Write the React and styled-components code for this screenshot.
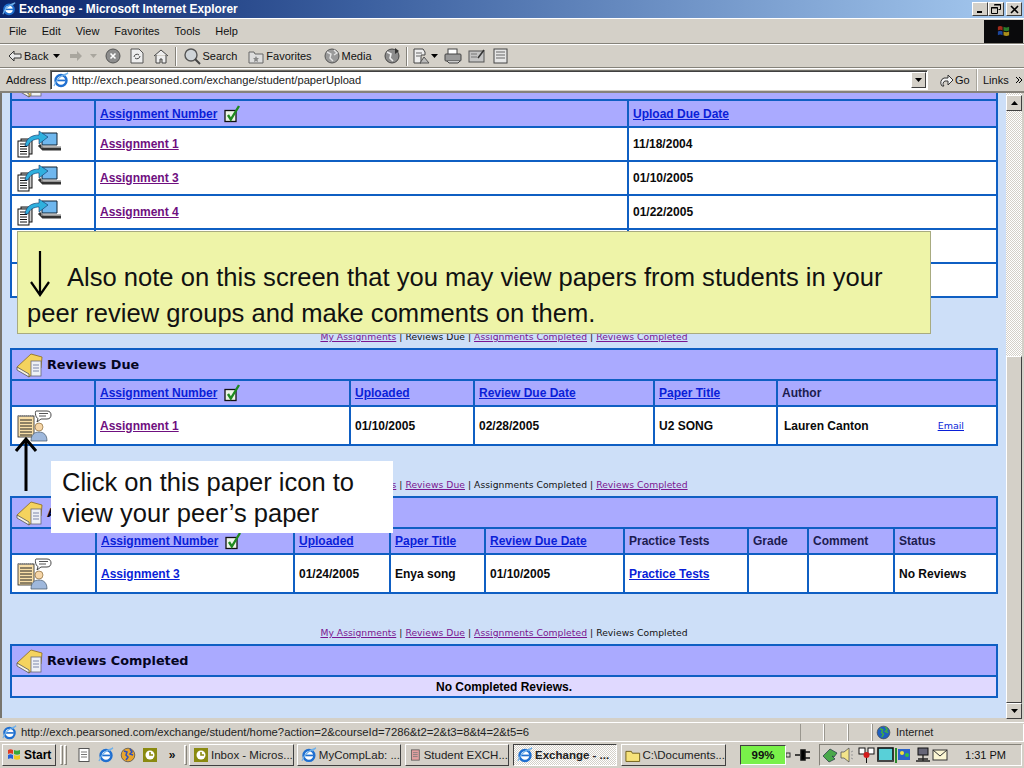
import React from "react"
import styled, { createGlobalStyle } from "styled-components"

const Global = createGlobalStyle`
  html, body { margin: 0; padding: 0; background: #d4d0c8; }
  * { box-sizing: border-box; }
`

const Window = styled.div`
  width: 1024px;
  height: 768px;
  display: flex;
  flex-direction: column;
  overflow: hidden;
  background: #d4d0c8;
  font-family: "Liberation Sans", Arial, sans-serif;
  font-size: 11px;
  color: #111;
`

const TitleBar = styled.div`
  height: 18px;
  flex: none;
  display: flex;
  align-items: center;
  padding: 0 2px;
  background: linear-gradient(90deg, #0a246a 0%, #3b5f9f 35%, #a6caf0 100%);
  color: #fff;
  font-weight: bold;
  font-size: 11.9px;
`

const TitleText = styled.span`
  flex: 1;
  margin-left: 3px;
`

const WinButton = styled.div`
  width: 16px;
  height: 14px;
  margin-left: ${p => (p.$gap ? 2 : 0)}px;
  background: #d4d0c8;
  border: 1px solid;
  border-color: #fff #404040 #404040 #fff;
  display: flex;
  align-items: center;
  justify-content: center;
  color: #000;
`

const Bar = styled.div`
  height: ${p => p.$h}px;
  flex: none;
  display: flex;
  align-items: center;
  border-bottom: 1px solid #85827a;
  border-top: 1px solid #fff;
`

const MenuBar = styled(Bar)`
  padding-left: 9px;
  gap: 15px;
`

const Throbber = styled.div`
  margin-left: auto;
  width: 39px;
  height: 23px;
  margin-right: 1px;
  background: #0a0a0c;
  display: flex;
  align-items: center;
  justify-content: center;
`

const ToolBar = styled(Bar)`
  padding-left: 8px;
`

const ToolLabel = styled.span`
  margin-left: ${p => p.$ml ?? 2}px;
  margin-right: ${p => p.$mr ?? 0}px;
`

const Spot = styled.div`
  width: ${p => p.$w ?? 18}px;
  height: 18px;
  margin-left: ${p => p.$ml ?? 0}px;
  flex: none;
  display: flex;
  align-items: center;
  justify-content: center;
`

const Divider = styled.div`
  width: 2px;
  height: 19px;
  flex: none;
  margin-left: ${p => p.$ml ?? 0}px;
  border-left: 1px solid #85827a;
  border-right: 1px solid #fff;
`

const AddressBar = styled(Bar)`
  padding-left: 6px;
  border-bottom: 2px solid #85827a;
`

const AddressLabel = styled.span`
  width: 44px;
  flex: none;
`

const AddressField = styled.div`
  width: 878px;
  height: 20px;
  flex: none;
  display: flex;
  align-items: center;
  background: #fff;
  border: 1px solid;
  border-color: #6b6a64 #fff #fff #6b6a64;
  box-shadow: inset 1px 1px 0 #404040;
  padding-left: 2px;
`

const Url = styled.span`
  margin-left: 3px;
  flex: 1;
  font-size: 11.15px;
  color: #222;
`

const Combo = styled.div`
  width: 15px;
  height: 16px;
  margin-right: 1px;
  background: #d4d0c8;
  border: 1px solid;
  border-color: #fff #404040 #404040 #fff;
  display: flex;
  align-items: center;
  justify-content: center;
`

const GoBox = styled.div`
  width: 38px;
  flex: none;
  display: flex;
  align-items: center;
  margin-left: 11px;
`

const LinksBox = styled.div`
  flex: 1;
  display: flex;
  align-items: center;
  gap: 6px;
  height: 22px;
  padding-left: 5px;
  border-left: 1px solid #fff;
  box-shadow: -1px 0 0 #a8a59c;
`

const Viewport = styled.div`
  flex: none;
  height: 625px;
  display: flex;
  border-left: 2px solid #77756e;
  border-right: 2px solid #d4d0c8;
`

const Page = styled.div`
  position: relative;
  flex: 1;
  overflow: hidden;
  background: #cddff8;
  padding: 0 8px;
  color: #000;
`

const Flow = styled.div`
  margin-top: -25px;
  display: flex;
  flex-direction: column;
`

const Panel = styled.div`
  border: 2px solid #0f5fc3;
  background: #fff;
`

const PanelTitle = styled.div`
  height: 31px;
  display: flex;
  align-items: center;
  padding-left: 4px;
  gap: 3px;
  background: #aaaaff;
  border-bottom: 2px solid #0f5fc3;
  font-family: "DejaVu Sans", Verdana, sans-serif;
  font-weight: bold;
  font-size: 12.8px;
  color: #05051e;
`

const Row = styled.div`
  display: grid;
  grid-template-columns: ${p => p.$cols};
  height: ${p => p.$h}px;
  background: ${p => (p.$head ? "#aaaaff" : "#fff")};
  border-bottom: ${p => (p.$last ? "none" : "2px solid #0f5fc3")};
`

const Cell = styled.div`
  display: flex;
  align-items: center;
  gap: 7px;
  padding-left: ${p => p.$pl ?? 4}px;
  border-left: ${p => (p.$first ? "none" : "2px solid #0f5fc3")};
  font-weight: bold;
  font-size: 12px;
  white-space: nowrap;
  position: relative;
`

const Plain = styled.span`
  color: ${p => (p.$head ? "#1c1c50" : "#0a0a0a")};
  margin-left: ${p => p.$ml ?? 0}px;
`

const Link = styled.a`
  color: ${p => (p.$visited ? "#6f0f7f" : "#0a1fd8")};
  text-decoration: underline;
  font-weight: bold;
  font-size: 12px;
`

const MailLink = styled.a`
  position: absolute;
  right: 32px;
  font-family: "DejaVu Sans", Verdana, sans-serif;
  font-weight: normal;
  font-size: 9.5px;
  color: #0a1fd8;
  text-decoration: underline;
`

const NavLine = styled.div`
  height: 50px;
  padding-bottom: 6px;
  display: flex;
  align-items: flex-end;
  justify-content: center;
  font-family: "DejaVu Sans", Verdana, sans-serif;
  font-size: 9.2px;
  letter-spacing: 0.05px;
  color: #111;
  white-space: pre;
`

const NavLink = styled.a`
  color: #7a1690;
  text-decoration: underline;
`

const EmptyRow = styled.div`
  height: 19px;
  background: #e0d9ff;
  display: flex;
  align-items: center;
  justify-content: center;
  font-weight: bold;
  font-size: 12px;
`

const YellowNote = styled.div`
  position: absolute;
  left: 15px;
  top: 138px;
  width: 914px;
  height: 103px;
  background: #eef4a8;
  border: 1px solid #a8ab80;
  padding: 27px 0 0 9px;
  font-size: 25.57px;
  line-height: 36px;
  color: #111;
`

const NoteIndent = styled.span`
  display: inline-block;
  width: 40px;
`

const WhiteNote = styled.div`
  position: absolute;
  left: 49px;
  top: 368px;
  width: 342px;
  height: 72px;
  background: #fff;
  padding: 6px 0 0 11px;
  font-size: 25.5px;
  line-height: 31px;
  color: #111;
`

const ArrowDown = styled.svg`
  position: absolute;
  left: 25px;
  top: 157px;
`

const ArrowUp = styled.svg`
  position: absolute;
  left: 12px;
  top: 343px;
`

const Scrollbar = styled.div`
  width: 16px;
  flex: none;
  display: flex;
  flex-direction: column;
  padding-top: 2px;
  background: repeating-conic-gradient(#d4d0c8 0 25%, #fff 0 50%) 0 0 / 2px 2px;
`

const ScrollButton = styled.div`
  height: 16px;
  flex: none;
  margin-top: ${p => (p.$end ? "auto" : "0")};
  background: #d4d0c8;
  border: 1px solid;
  border-color: #fff #404040 #404040 #fff;
  display: flex;
  align-items: center;
  justify-content: center;
`

const Thumb = styled.div`
  height: 347px;
  margin-top: 245px;
  flex: none;
  background: #d4d0c8;
  border: 1px solid;
  border-color: #fff #404040 #404040 #fff;
`

const StatusBar = styled.div`
  height: 19px;
  flex: none;
  display: flex;
  align-items: center;
  padding-left: 2px;
  margin-top: 4px;
  border-top: 1px solid #fff;
  color: #222;
`

const StatusText = styled.span`
  width: 779px;
  flex: none;
  margin-left: 4px;
  font-size: 11.3px;
  white-space: nowrap;
`

const StatusSlot = styled.div`
  width: ${p => p.$w}px;
  flex: ${p => (p.$w ? "none" : 1)};
  height: 17px;
  display: flex;
  align-items: center;
  gap: 5px;
  padding-left: 3px;
  border-left: 1px solid #9a978f;
  border-right: 1px solid #fff;
`

const TaskBar = styled.div`
  flex: 1;
  display: flex;
  align-items: center;
  padding-left: 2px;
  border-top: 1px solid #fff;
  background: #d4d0c8;
`

const StartButton = styled.div`
  width: 54px;
  height: 22px;
  flex: none;
  display: flex;
  align-items: center;
  gap: 2px;
  padding-left: 3px;
  font-weight: bold;
  font-size: 12px;
  color: #000;
  border: 1px solid;
  border-color: #fff #404040 #404040 #fff;
`

const Grip = styled.div`
  width: 3px;
  height: 20px;
  flex: none;
  margin-left: ${p => p.$ml ?? 4}px;
  border: 1px solid;
  border-color: #fff #85827a #85827a #fff;
`

const Quick = styled.div`
  width: 20px;
  height: 18px;
  flex: none;
  margin-left: ${p => p.$ml ?? 3}px;
  display: flex;
  align-items: center;
  justify-content: center;
  font-size: 12px;
  font-weight: bold;
`

const TaskButton = styled.div`
  width: ${p => p.$w ?? 104}px;
  height: 22px;
  flex: none;
  margin-left: ${p => p.$ml ?? 4}px;
  display: flex;
  align-items: center;
  gap: 2px;
  padding-left: 3px;
  white-space: nowrap;
  overflow: hidden;
  font-size: 11.5px;
  font-weight: ${p => (p.$active ? "bold" : "normal")};
  color: #222;
  border: 1px solid;
  border-color: ${p => (p.$active ? "#404040 #fff #fff #404040" : "#fff #404040 #404040 #fff")};
  background: ${p => (p.$active ? "repeating-conic-gradient(#d4d0c8 0 25%, #fff 0 50%) 0 0 / 2px 2px" : "#d4d0c8")};
`

const Battery = styled.div`
  width: 46px;
  height: 20px;
  flex: none;
  margin-left: 14px;
  background: #79f04a;
  border: 1px solid;
  border-color: #404040 #fff #fff #404040;
  display: flex;
  align-items: center;
  justify-content: center;
  font-weight: bold;
  font-size: 11.5px;
`

const Tray = styled.div`
  flex: 1;
  height: 22px;
  margin: 0 2px 0 7px;
  display: flex;
  align-items: center;
  padding-left: 3px;
  border: 1px solid;
  border-color: #85827a #fff #fff #85827a;
`

const Clock = styled.span`
  margin-left: auto;
  margin-right: 15px;
`

const IeIcon = ({ size = 16 }) => (
  <svg width={size} height={size} viewBox="0 0 16 16">
    <circle cx="8" cy="8.5" r="5.5" fill="#fff" stroke="#1f6fd0" strokeWidth="2.4" />
    <rect x="4" y="7.6" width="8.5" height="1.7" fill="#1f6fd0" />
    <path d="M1 14c2-6 7-11 14-13-2 1.500-3 2-4 3" fill="none" stroke="#6fb0ea" strokeWidth="1.200" />
  </svg>
)

const CheckIcon = () => (
  <svg width="18" height="20" viewBox="0 0 18 20">
    <rect x="1" y="6.500" width="11" height="11" fill="#eef5e8" stroke="#111" strokeWidth="1.300" />
    <path d="M4 11l2.800 4.500L15 2" fill="none" stroke="#1f8a1f" strokeWidth="2.400" />
  </svg>
)

const BookIcon = () => (
  <svg width="28" height="28" viewBox="0 0 28 28">
    <path d="M1 16L15 3l11 3-1 11-12 9z" fill="#f4d35e" stroke="#8a6a1a" strokeWidth=".8" />
    <path d="M1 16v3l12 7v-3z" fill="#f7f3e0" stroke="#555" strokeWidth=".8" />
    <rect x="15" y="10" width="10" height="15" fill="#eef1f6" stroke="#667" strokeWidth=".8" />
    <path d="M17 14h6M17 17h6M17 20h6" stroke="#7c88aa" strokeWidth="1.200" />
  </svg>
)

const UploadIcon = () => (
  <svg width="46" height="28" viewBox="0 0 46 28">
    <path d="M25 3h15v12H25z" fill="#6fb7ee" stroke="#123" strokeWidth="1" />
    <path d="M22 15l4 4h18" fill="none" stroke="#333" strokeWidth="3" />
    <path d="M24 17h20" stroke="#999" strokeWidth="1.400" />
    <rect x="4" y="9" width="11" height="15" fill="#ccc" stroke="#111" />
    <rect x="1" y="11" width="11" height="16" fill="#fff" stroke="#111" />
    <path d="M3 14h7M3 16.500h7M3 19h7M3 21.500h7M3 24h7" stroke="#111" />
    <path d="M8 16C9 8 15 5 22 5V1l9 6-9 7V9c-5 0-9 2-11 7z" fill="#2fb0de" stroke="#136" strokeWidth=".6" />
  </svg>
)

const ReviewIcon = () => (
  <svg width="36" height="32" viewBox="0 0 36 32">
    <rect x="2" y="6" width="16" height="21" fill="#f9dfa8" stroke="#222" strokeWidth=".8" />
    <path d="M2 6h16" stroke="#888" strokeWidth="2" strokeDasharray="1 1" />
    <path d="M4 10h12M4 13h12M4 16h12M4 19h12M4 22h12M4 25h12" stroke="#222" />
    <circle cx="23" cy="17" r="4" fill="#f6d6a8" stroke="#8a6a3a" strokeWidth=".7" />
    <path d="M15 31c0-6 3-9 8-9s8 3 8 9z" fill="#9fb8dc" stroke="#456" strokeWidth=".7" />
    <path d="M20 1h11c3 0 4 2 4 4s-1 4-4 4h-6l-4 3 1-3.500c-3-1-3-7.500-2-7.500z" fill="#fff" stroke="#333" strokeWidth=".9" />
    <path d="M23 3.500h9M23 6h7" stroke="#555" />
  </svg>
)

const TinyPage = ({ fill = "#eee" }) => (
  <svg width="16" height="16" viewBox="0 0 16 16">
    <rect x="3" y="1.500" width="10" height="13" fill={fill} stroke="#555" />
    <path d="M5 5h6M5 7.500h6M5 10h6" stroke="#777" />
  </svg>
)

const Globe = ({ size = 16, fill = "#8a8a8a", mark = "#ddd" }) => (
  <svg width={size} height={size} viewBox="0 0 16 16">
    <circle cx="8" cy="8" r="6.800" fill={fill} stroke="#444" strokeWidth=".7" />
    <path d="M4 4l3 1-1 3 2 2-2 3M10 2l2 3-2 2 3 1" fill="none" stroke={mark} strokeWidth="1.500" />
  </svg>
)

const OutlookIcon = () => (
  <svg width="16" height="16" viewBox="0 0 16 16">
    <rect x="1" y="1" width="14" height="14" fill="#8a8a10" />
    <circle cx="8" cy="8" r="4.500" fill="#fff" />
    <path d="M8 5v3h3" fill="none" stroke="#8a8a10" strokeWidth="1.600" />
  </svg>
)

const FolderIcon = () => (
  <svg width="17" height="15" viewBox="0 0 17 15">
    <path d="M1 3h6l1 2h8v9H1z" fill="#f6e27a" stroke="#6b5a14" />
  </svg>
)

const WinFlag = ({ size = 16, dim }) => (
  <svg width={size} height={size} viewBox="0 0 16 16" opacity={dim ? 0.7 : 1}>
    <path d="M2 3c2-1 3-1 5 0v4C5 6 4 6 2 7z" fill="#e03a22" />
    <path d="M8 3c2 1 4 1 6 0v4c-2 1-4 1-6 0z" fill="#38a838" />
    <path d="M2 8c2-1 3-1 5 0v4c-2-1-3-1-5 0z" fill="#2460d8" />
    <path d="M8 8c2 1 4 1 6 0v4c-2 1-4 1-6 0z" fill="#f0c820" />
  </svg>
)

const TrayIcons = () => (
  <svg width="126" height="18" viewBox="0 0 126 18">
    <path d="M0 10l7-7 7 4-3 4-2-1 3 3-6 3z" fill="#4aa84a" stroke="#234" strokeWidth=".7" />
    <path d="M18 6h3l5-4v14l-5-4h-3z" fill="#f3e48a" stroke="#555" strokeWidth=".8" />
    <path d="M28 6l2-1M28 9h2M28 12l2 1" stroke="#999" />
    <rect x="36" y="2" width="6" height="6" fill="#fff" stroke="#111" />
    <rect x="45" y="2" width="6" height="6" fill="#fff" stroke="#111" />
    <path d="M43.500 8v9" stroke="#111" />
    <circle cx="43.500" cy="9" r="3" fill="#d21c1c" />
    <rect x="55" y="2" width="15" height="13" fill="#58d0d8" stroke="#111" strokeWidth="1.600" />
    <rect x="55" y="14" width="15" height="2" fill="#444" />
    <rect x="75" y="3" width="12" height="11" fill="#2a62c8" />
    <path d="M73 2v15" stroke="#2a8a2a" strokeWidth="2" />
    <circle cx="79" cy="7" r="2" fill="#f0e040" />
    <circle cx="84" cy="9" r="2" fill="#30c040" />
    <rect x="95" y="2" width="10" height="7" fill="#667" stroke="#111" />
    <path d="M93 15h14M100 9v6M95 13h10" stroke="#222" strokeWidth="1.300" />
    <rect x="110" y="4" width="14" height="10" fill="#fbf6d2" stroke="#333" />
    <path d="M110 4l7 6 7-6" fill="none" stroke="#333" />
  </svg>
)

const Triangle = ({ up, color = "#000", w = 7 }) => (
  <svg width={w} height="4" viewBox="0 0 7 4">
    <path d={up ? "M3.500 0L7 4H0z" : "M0 0h7L3.500 4z"} fill={color} />
  </svg>
)

const FIRST = "82px 533px 1fr"
const DUE = "82px 255px 124px 180px 123px 1fr"
const DONE = "83px 198px 96px 95px 139px 124px 60px 86px 1fr"

const Nav = ({ current }) => {
  const names = ["My Assignments", "Reviews Due", "Assignments Completed", "Reviews Completed"]
  return (
    <NavLine>
      {names.map((n, i) => (
        <React.Fragment key={n}>
          {i > 0 && " | "}
          {n === current ? n : <NavLink>{n}</NavLink>}
        </React.Fragment>
      ))}
    </NavLine>
  )
}

const App = () => (
  <Window>
    <Global />
    <TitleBar>
      <IeIcon size={14} />
      <TitleText>Exchange - Microsoft Internet Explorer</TitleText>
      <WinButton>
        <svg width="8" height="8"><path d="M1 7h5" stroke="#000" strokeWidth="2" /></svg>
      </WinButton>
      <WinButton>
        <svg width="10" height="10"><path d="M3.500 .5h6v5h-2M.5 3.500h6v6h-6z" fill="none" stroke="#000" /><path d="M3 1h7M0 4h7" stroke="#000" /></svg>
      </WinButton>
      <WinButton $gap>
        <svg width="9" height="9"><path d="M1 1l7 7M8 1L1 8" stroke="#000" strokeWidth="1.600" /></svg>
      </WinButton>
    </TitleBar>
    <MenuBar $h={26}>
      <span>File</span>
      <span>Edit</span>
      <span>View</span>
      <span>Favorites</span>
      <span>Tools</span>
      <span>Help</span>
      <Throbber><WinFlag size={15} dim /></Throbber>
    </MenuBar>
    <ToolBar $h={24}>
      <Spot $w={14}>
        <svg width="14" height="12"><path d="M1 6l5-5v3h7v4H6v3z" fill="#e8e8e8" stroke="#333" /></svg>
      </Spot>
      <ToolLabel>Back</ToolLabel>
      <Spot $w={7} $ml={5}><Triangle /></Spot>
      <Spot $w={14} $ml={9}>
        <svg width="14" height="12"><path d="M13 6L8 1v3H1v4h7v3z" fill="#a9a69e" /></svg>
      </Spot>
      <Spot $w={7} $ml={7}><Triangle color="#a9a69e" /></Spot>
      <Spot $ml={7}>
        <svg width="16" height="16"><circle cx="8" cy="8" r="7" fill="#8c8c8c" stroke="#555" /><path d="M5.500 5.500l5 5M10.500 5.500l-5 5" stroke="#fff" strokeWidth="1.600" /></svg>
      </Spot>
      <Spot $ml={6}>
        <svg width="14" height="16"><path d="M1 1h8l4 4v10H1z" fill="#eee" stroke="#555" /><path d="M4 9a3 3 0 0 1 5-2M10 8a3 3 0 0 1-5 2" fill="none" stroke="#444" /></svg>
      </Spot>
      <Spot $ml={6}>
        <svg width="16" height="16"><path d="M1 8l7-6 7 6M3 7v8h4v-4h2v4h4V7" fill="#eee" stroke="#444" /></svg>
      </Spot>
      <Divider $ml={5} />
      <Spot $ml={6}>
        <svg width="18" height="18"><circle cx="8" cy="8" r="6" fill="#cfd4d8" stroke="#555" strokeWidth="1.400" /><path d="M12 12l5 5" stroke="#444" strokeWidth="2" /></svg>
      </Spot>
      <ToolLabel $ml={1} $mr={11}>Search</ToolLabel>
      <Spot $w={16}>
        <svg width="16" height="15"><path d="M1 3h5l1 2h8v9H1z" fill="#ddd" stroke="#666" /><path d="M8 7l1 2h2l-1.500 1.500L10 13l-2-1-2 1 .5-2.500L5 9h2z" fill="#888" /></svg>
      </Spot>
      <ToolLabel $mr={11}>Favorites</ToolLabel>
      <Spot>
        <svg width="18" height="18"><circle cx="9" cy="9" r="7" fill="#9a9a9a" stroke="#555" /><path d="M4 5l4 2-1 4 3 3M11 3l3 3-3 2" fill="none" stroke="#e4e4e4" strokeWidth="1.400" /></svg>
      </Spot>
      <ToolLabel $ml={1} $mr={11}>Media</ToolLabel>
      <Spot>
        <svg width="18" height="18"><circle cx="9" cy="9" r="7" fill="#8c8c8c" stroke="#444" /><path d="M4 5l4 2-1 4 3 3" fill="none" stroke="#eee" strokeWidth="1.600" /><path d="M12 1l4 3-4 3z" fill="#333" /></svg>
      </Spot>
      <Divider $ml={5} />
      <Spot $ml={5}>
        <svg width="18" height="16"><path d="M1 1h9l2 3v3H8v8H1z" fill="#eee" stroke="#444" /><path d="M3 5h6M3 8h4" stroke="#666" /><path d="M7 15l4-6 5 6z" fill="#bbb" stroke="#555" /></svg>
      </Spot>
      <Spot $w={7}><Triangle /></Spot>
      <Spot $ml={6}>
        <svg width="18" height="16"><rect x="4" y="1" width="9" height="6" fill="#fff" stroke="#444" /><rect x="1" y="6" width="16" height="7" rx="1" fill="#999" stroke="#444" /><path d="M3 13l2 2h9l2-2" fill="#ccc" stroke="#444" /></svg>
      </Spot>
      <Spot $ml={6}>
        <svg width="18" height="16"><rect x="1" y="3" width="15" height="11" fill="#c4c4c4" stroke="#555" /><path d="M3 6h6M3 9h6" stroke="#777" /><path d="M10 10l6-8" stroke="#333" strokeWidth="1.600" /></svg>
      </Spot>
      <Spot $ml={6}>
        <svg width="15" height="16"><rect x="1" y="1" width="13" height="14" fill="#e6e6e6" stroke="#444" /><path d="M3 4h9M3 7h9M3 10h9" stroke="#666" /></svg>
      </Spot>
    </ToolBar>
    <AddressBar $h={25}>
      <AddressLabel>Address</AddressLabel>
      <AddressField>
        <IeIcon />
        <Url>http://exch.pearsoned.com/exchange/student/paperUpload</Url>
        <Combo><Triangle /></Combo>
      </AddressField>
      <GoBox>
        <svg width="16" height="16"><path d="M3 14a5 5 0 0 1 2-8h4V3l5 5-5 5V9H6a3 3 0 0 0-1 5z" fill="#f2f2f2" stroke="#333" /></svg>
        Go
      </GoBox>
      <LinksBox>
        Links
        <svg width="8" height="8"><path d="M1 1l3 3-3 3M4 1l3 3-3 3" fill="none" stroke="#000" /></svg>
      </LinksBox>
    </AddressBar>
    <Viewport>
      <Page>
        <Flow>
          <Panel>
            <PanelTitle><BookIcon /></PanelTitle>
            <Row $cols={FIRST} $h={27} $head>
              <Cell $first />
              <Cell><Link>Assignment Number</Link><CheckIcon /></Cell>
              <Cell><Link>Upload Due Date</Link></Cell>
            </Row>
            {[["Assignment 1", "11/18/2004"], ["Assignment 3", "01/10/2005"], ["Assignment 4", "01/22/2005"], ["", ""], ["", ""]].map(([name, date], i) => (
              <Row $cols={FIRST} $h={i === 4 ? 32 : 34} $last={i === 4} key={i}>
                <Cell $first $pl={5}>{name && <UploadIcon />}</Cell>
                <Cell><Link $visited>{name}</Link></Cell>
                <Cell><Plain>{date}</Plain></Cell>
              </Row>
            ))}
          </Panel>
          <Nav current="Reviews Due" />
          <Panel>
            <PanelTitle><BookIcon />Reviews Due</PanelTitle>
            <Row $cols={DUE} $h={26} $head>
              <Cell $first />
              <Cell><Link>Assignment Number</Link><CheckIcon /></Cell>
              <Cell><Link>Uploaded</Link></Cell>
              <Cell><Link>Review Due Date</Link></Cell>
              <Cell><Link>Paper Title</Link></Cell>
              <Cell><Plain $head>Author</Plain></Cell>
            </Row>
            <Row $cols={DUE} $h={37} $last>
              <Cell $first $pl={4}><ReviewIcon /></Cell>
              <Cell><Link $visited>Assignment 1</Link></Cell>
              <Cell><Plain>01/10/2005</Plain></Cell>
              <Cell><Plain>02/28/2005</Plain></Cell>
              <Cell><Plain>U2 SONG</Plain></Cell>
              <Cell><Plain $ml={2}>Lauren Canton</Plain><MailLink>Email</MailLink></Cell>
            </Row>
          </Panel>
          <Nav current="Assignments Completed" />
          <Panel>
            <PanelTitle><BookIcon />Assignments Completed</PanelTitle>
            <Row $cols={DONE} $h={26} $head>
              <Cell $first />
              <Cell><Link>Assignment Number</Link><CheckIcon /></Cell>
              <Cell><Link>Uploaded</Link></Cell>
              <Cell><Link>Paper Title</Link></Cell>
              <Cell><Link>Review Due Date</Link></Cell>
              <Cell><Plain $head>Practice Tests</Plain></Cell>
              <Cell><Plain $head>Grade</Plain></Cell>
              <Cell><Plain $head>Comment</Plain></Cell>
              <Cell><Plain $head>Status</Plain></Cell>
            </Row>
            <Row $cols={DONE} $h={37} $last>
              <Cell $first $pl={4}><ReviewIcon /></Cell>
              <Cell><Link>Assignment 3</Link></Cell>
              <Cell><Plain>01/24/2005</Plain></Cell>
              <Cell><Plain>Enya song</Plain></Cell>
              <Cell><Plain>01/10/2005</Plain></Cell>
              <Cell><Link>Practice Tests</Link></Cell>
              <Cell />
              <Cell />
              <Cell><Plain>No Reviews</Plain></Cell>
            </Row>
          </Panel>
          <Nav current="Reviews Completed" />
          <Panel>
            <PanelTitle><BookIcon />Reviews Completed</PanelTitle>
            <EmptyRow>No Completed Reviews.</EmptyRow>
          </Panel>
        </Flow>
        <YellowNote><NoteIndent />Also note on this screen that you may view papers from students in your<br />peer review groups and make comments on them.</YellowNote>
        <ArrowDown width="26" height="48" viewBox="0 0 26 48">
          <path d="M13 1v44M4 32l9 13 9-13" fill="none" stroke="#000" strokeWidth="2.200" />
        </ArrowDown>
        <WhiteNote>Click on this paper icon to<br />view your peer’s paper</WhiteNote>
        <ArrowUp width="24" height="56" viewBox="0 0 24 56">
          <path d="M12 55V3M2 15L12 3l10 12" fill="none" stroke="#000" strokeWidth="3" />
        </ArrowUp>
      </Page>
      <Scrollbar>
        <ScrollButton><Triangle up /></ScrollButton>
        <Thumb />
        <ScrollButton $end><Triangle /></ScrollButton>
      </Scrollbar>
    </Viewport>
    <StatusBar>
      <IeIcon size={15} />
      <StatusText>http://exch.pearsoned.com/exchange/student/home?action=2&amp;courseId=7286&amp;t2=2&amp;t3=8&amp;t4=2&amp;t5=6</StatusText>
      <StatusSlot $w={24} />
      <StatusSlot $w={24} />
      <StatusSlot $w={24} />
      <StatusSlot><Globe size={15} fill="#1f5fc0" mark="#3fb03f" />Internet</StatusSlot>
    </StatusBar>
    <TaskBar>
      <StartButton><WinFlag />Start</StartButton>
      <Grip />
      <Grip $ml={1} />
      <Quick $ml={7}><TinyPage fill="#fff" /></Quick>
      <Quick $ml={2}><IeIcon /></Quick>
      <Quick $ml={2}><Globe fill="#e9a52c" mark="#2b4fc0" /></Quick>
      <Quick $ml={2}><OutlookIcon /></Quick>
      <Quick $ml={2}>»</Quick>
      <Grip $ml={2} />
      <TaskButton $w={105} $ml={2}><OutlookIcon />Inbox - Micros...</TaskButton>
      <TaskButton $ml={3}><IeIcon />MyCompLab: ...</TaskButton>
      <TaskButton><TinyPage fill="#e4a0a0" />Student EXCH...</TaskButton>
      <TaskButton $active><IeIcon />Exchange - ...</TaskButton>
      <TaskButton $w={105}><FolderIcon />C:\Documents...</TaskButton>
      <Battery>99%</Battery>
      <svg width="26" height="14" viewBox="0 0 26 14">
        <rect x="0" y="5" width="4" height="4" fill="none" stroke="#333" />
        <path d="M9 7h5M15 2h4v10h-4zM19 4h5M19 10h5" stroke="#111" strokeWidth="1.500" />
      </svg>
      <Tray><TrayIcons /><Clock>1:31 PM</Clock></Tray>
    </TaskBar>
  </Window>
)

export default App
